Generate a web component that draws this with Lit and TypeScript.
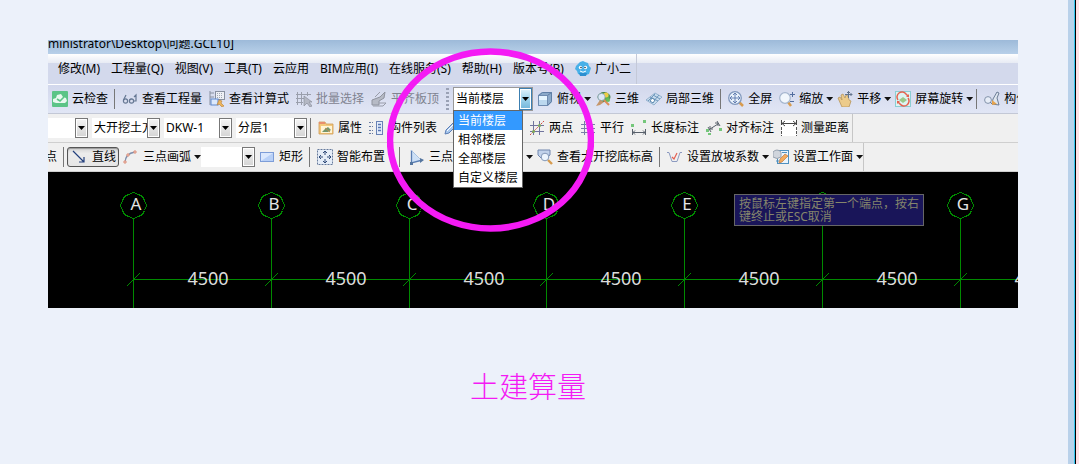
import { LitElement, html, svg, css, nothing, TemplateResult } from "lit";
import { customElement, property } from "lit/decorators.js";

const icons: Record<string, TemplateResult> = {
  mascot: svg`<path d="M5 1 3 3 1 5 0 8l2 2 1 3 3 1 2 1 3-1 3-1 1-3 1-3-2-2-1-3-3-1-2-1z" fill="#48b0e8"/><path d="M4 12h8l-1 3H5z" fill="#2c8fd0"/><circle cx="5.500" cy="6.500" r="1.700" fill="#fff"/><circle cx="10.500" cy="6.500" r="1.700" fill="#fff"/><circle cx="6" cy="6.500" r=".8" fill="#234"/><circle cx="10" cy="6.500" r=".8" fill="#234"/><path d="M5 10q3 2.500 6 0" stroke="#fff" fill="none"/>`,
  cloud: svg`<rect width="16" height="16" rx="1" fill="#5cc487"/><path d="M4 12h9l2-2-1-3-3-1-2-3-4 1-1 3-3 1v3z" fill="#e9f8ef"/><path d="m5 8 3 2 4-4" stroke="#5cc487" stroke-width="1.600" fill="none"/>`,
  glasses: svg`<g fill="none" stroke="#667894" stroke-width="1.200"><circle cx="3.500" cy="10" r="2.100"/><circle cx="9.500" cy="10" r="2.100"/><path d="M1.500 9 4 4M7.500 9l2-1M11.500 10H14V4l-2 2"/></g>`,
  formula: svg`<path d="M1 0v14M1 2h4M1 6h4" stroke="#8890a0" fill="none"/><rect x="6.500" y=".5" width="9" height="8" fill="#eef0f5" stroke="#8890a0"/><path d="M8 2.500h6M8 4.500h6M8 6.500h6" stroke="#a0a6b4" stroke-dasharray="1 1"/><rect x="2" y="8" width="7" height="6" fill="#dce8fb" stroke="#5e89cf"/><path d="m10 9 3 1-1 2 3 3-2 1-3-3-2 1z" fill="#ecb45c" stroke="#b98035" stroke-width=".6"/>`,
  batch: svg`<g fill="none" stroke="#9a9fac"><path d="M1.500 1v13M5.500 1v13M0 3.500h15M0 7.500h8M0 11.500h7M11.500 1v4"/></g><path d="M8 5v10l3-3 3 4 2-1-3-4h3z" fill="#b4b8c4" stroke="#8b8f9c" stroke-width=".7"/>`,
  slab: svg`<path d="M1 9 9 6l5-5-1 6-5 3v4H1z" fill="#b6bac5" stroke="#8f939e"/><path d="m4 6 5-5M8 12h7l-3 3H2" stroke="#989ca8" fill="none"/>`,
  cube: svg`<path d="m1 4 4-3h10v10l-4 4H1z" fill="#8ba9c9"/><path d="M1.500 4.500h9v10h-9z" fill="#bcd8ef" stroke="#6f8bb0"/><path d="m1.500 4.500 4-3h9l-4 3M14.500 1.500v9l-4 4" fill="none" stroke="#5f7ea6"/><path d="M2 5h8v4H2z" fill="#e6f5ff"/>`,
  orbit: svg`<ellipse cx="9" cy="6" rx="6" ry="4.500" fill="#5eae55" stroke="#447c48"/><circle cx="11" cy="4" r="2.500" fill="#eccd45"/><circle cx="6.500" cy="6" r="3.500" fill="#dce8f4" stroke="#8aa0ba" stroke-width=".7"/><path d="m1 15 4-6 4 2-4 3z" fill="#c5966b"/><path d="m9 9 5 5" stroke="#dc8d59" stroke-width="2"/><circle cx="13" cy="9" r="2" fill="#64bd5a"/>`,
  part3d: svg`<path d="m0 9 9-7 7 4-8 8z" fill="#c9ddee" stroke="#7b9fc0" stroke-width=".7"/><path d="m4 6 8 4M7 4l7 4M2 10l7-7M6 12l7-8" fill="none" stroke="#6f97bc"/><path d="m6 7 3 2-2 3-3-2z" fill="#fff" stroke="#5785ae"/>`,
  full: svg`<path d="m11 11 4 4" stroke="#d79b4e" stroke-width="2.500"/><circle cx="7" cy="7" r="6.300" fill="#e8f1fb" stroke="#8198bd" stroke-width="1.300"/><path d="M7 2v10M2 7h10M5 4l2-2 2 2M5 10l2 2 2-2M4 5 2 7l2 2M10 5l2 2-2 2" fill="none" stroke="#5a76ab" stroke-width=".9"/>`,
  zoom: svg`<path d="m9 11 3 4" stroke="#d79b4e" stroke-width="2.500"/><circle cx="6" cy="7" r="5.300" fill="#f2f7fd" stroke="#a5b6ce" stroke-width="1.200"/><path d="M11 3.500h5M13.500 1v5M11 10.500h4" stroke="#526d9e"/>`,
  pan: svg`<path d="m1 7 2-1 2 3-1-5 2-1 2 4 1-3 2 1 1 4 2 1-2 6H5z" fill="#eccb8b" stroke="#b8955c" stroke-width=".8"/><path d="M11.500 0v7M8 3.500h7M10 2l1.500-1.500L13 2M13.500 2 15 3.500 13.500 5" fill="none" stroke="#62738d"/>`,
  rotate: svg`<rect x=".5" y=".5" width="15" height="15" fill="#def3f2" stroke="#8bced3"/><path d="M3 9a5 5 0 0 1 8-6l2 2M13 7a5 5 0 0 1-8 6l-2-2" fill="none" stroke="#e66250" stroke-width="1.500"/><path d="m4 9 4-3 4 3-4 3z" fill="#9bc98a"/><path d="M11 6h3V3zM5 10H2v3z" fill="#e66250"/>`,
  member: svg`<circle cx="4" cy="9" r="3.400" fill="#e7edf7" stroke="#8292aa"/><path d="m6 11 3 3M8 13l1-5 4-7 2 1-2 5 2 7z" fill="#dfe6ef" stroke="#6b7c96"/><path d="m8 9 5 4-5 1z" fill="#e6a34d"/>`,
  props: svg`<path d="M1 2h6l1 2h7v10H1z" fill="#f3c97b" stroke="#cd9955" stroke-width=".8"/><path d="M1 2h6v2H1z" fill="#e88f6d"/><path d="M3 6h11v7H3z" fill="#fff5d6"/><path d="m4 12 3-3 3-2 3 3-3 2z" fill="#74966d"/><path d="m7 8 5 4" stroke="#c08a4c"/>`,
  list: svg`<path d="M0 2.500h4M0 6.500h4M0 10.500h4M0 13.500h4" stroke="#687ca3" stroke-dasharray="2 1"/><rect x="7.500" y="1.500" width="6" height="13" fill="#e4edfb" stroke="#6983b5"/><path d="M9 4.500h3M9 7.500h3M9 10.500h3" stroke="#5877b2" stroke-width="1.500"/>`,
  pencil: svg`<path d="m1 14 1-4 8-8 3 3-8 8z" fill="#a9c8ed" stroke="#5c7eb5"/><path d="m3 11 7-7" stroke="#fff"/>`,
  twopt: svg`<path d="M4.500 1v14M10.500 1v14M1 5.500h14M1 11.500h14" stroke="#71759e"/><path d="M1 15 15 1" stroke="#d34c45" stroke-dasharray="2 1"/><circle cx="4.500" cy="11.500" r="1.500" fill="#7cac5c"/><circle cx="10.500" cy="5.500" r="1.500" fill="#7cac5c"/>`,
  parallel: svg`<path d="M4.500 1v14M1 4.500h5M10 4.500h5M1 8.500h14M1 12.500h14M11.500 1v14" stroke="#7780a6"/>`,
  length: svg`<path d="M1.500 9v6M14.500 9v6M2 12.500h12M4 10.500l-2 2 2 2M12 10.500l2 2-2 2" fill="none" stroke="#58606b"/><path d="M0 4h3v3H0zM12 0h3v3h-3z" fill="#75c77b"/>`,
  align: svg`<path d="m2 7 3 5M11 1l3 5M4 9l8-5M4 6v3h3M9 3h3v3" fill="none" stroke="#58606b"/><path d="M0 9h3v3H0zM2 13h3v2H2zM13 8h3v3h-3z" fill="#75c77b"/>`,
  measure: svg`<path d="M0 0h16v16H0z" fill="#fff"/><path d="M.5 0v5M15.500 0v5M1 3.500h14M4 1 1 3.500 4 6M12 1l3 2.500L12 6" fill="none" stroke="#444"/><path d="M.5 7v9M15.500 7v9" stroke="#555" stroke-dasharray="3 1"/>`,
  line: svg`<path d="m1 2 11 11M12 8v5H7" fill="none" stroke="#223f7c" stroke-width="1.200"/>`,
  arc: svg`<path d="M2 14C2 8 5 4 12 3" fill="none" stroke="#7f8fac" stroke-width="1.300"/><circle cx="2" cy="13" r="1.200" fill="#f4d3c9" stroke="#dc8d78"/><circle cx="5" cy="6" r="1.200" fill="#f4d3c9" stroke="#dc8d78"/><circle cx="12" cy="3" r="1.200" fill="#f4d3c9" stroke="#dc8d78"/>`,
  rect: svg`<rect x="1.500" y="3.500" width="13" height="9" fill="#b8d0f7" stroke="#7d9dd8"/><path d="M2 4h12L2 12z" fill="#dbe8fd"/>`,
  smart: svg`<rect x=".5" y=".5" width="15" height="15" fill="#e5edf8" stroke="#667a9c" stroke-dasharray="2 1"/><path d="M8 2v4M8 10v4M2 8h4M10 8h4M6 4l2-2 2 2M6 12l2 2 2-2M4 6 2 8l2 2M12 6l2 2-2 2" fill="none" stroke="#304b79"/>`,
  slope: svg`<path d="m2 1 10 11-10 2z" fill="#cde0f6"/><path d="M2.500 1v13l11-3" fill="none" stroke="#5a7eb3" stroke-width="1.300"/><path d="m2 1 10 10" fill="none" stroke="#a6c1e2"/><path d="m11 9 4 2-4 3zM1 13h3v3H1z" fill="#56769f"/>`,
  inspect: svg`<path d="M1 1h12v5l-4 3H4L1 6z" fill="#c1d2eb" stroke="#7186ae"/><path d="m11 11 4 4" stroke="#d79b4e" stroke-width="2.400"/><circle cx="8" cy="8" r="3.800" fill="#edf5fe" stroke="#8398b8"/>`,
  ratio: svg`<path d="M0 3.500h2l3 9h5l3-9h2" fill="none" stroke="#8c9ac0"/><path d="m5 8 2 2 3-6" fill="none" stroke="#e36052" stroke-width="1.200"/>`,
  face: svg`<rect x="4.500" y="1.500" width="11" height="13" fill="#eaf4fc" stroke="#4e91c0"/><path d="M0 3q4-4 8 0v5q-4 3-8 0z" fill="#d0d5dc" stroke="#9aa3af"/><path d="m6 14 1-4 5-5 3 2-6 6z" fill="#f2aa5b" stroke="#bb7843" stroke-width=".7"/><path d="M9 3.500h5M3 12h3" stroke="#4e91c0"/>`,
};

@customElement("tool-button")
class ToolButton extends LitElement {
  @property() icon = "";
  @property() label = "";
  @property({ type: Boolean }) drop = false;
  @property({ type: Boolean }) off = false;
  @property({ type: Boolean }) pressed = false;
  static styles = css`
    :host { display: flex; flex: none; }
    button { display: flex; align-items: center; flex: 1; gap: 4px; height: 22px; padding: 0 3px 0 4px; border: 0; background: none; color: #000;
      font: 12px/20px "Noto Sans", "Noto Sans CJK SC", sans-serif; white-space: nowrap; }
    button:disabled { color: #7f8390; }
    .drop { padding-right: 0; }
    .drop .label { margin-right: -1px; }
    .pressed { height: 20px; padding: 0 2px 0 4px; border: 1px solid #555; border-radius: 3px; background: linear-gradient(#d2d2d2, #ececec 30%, #e6e6e6); box-shadow: inset 0 1px 1px #999; }
    svg { width: 16px; height: 16px; flex: none; }
    .arrow { width: 7px; height: 4px; background: #111; clip-path: polygon(0 0, 100% 0, 50% 100%); }
  `;
  render() {
    return html`<button class=${this.drop ? "drop" : this.pressed ? "pressed" : ""} ?disabled=${this.off} aria-label=${this.label || this.icon}>
      ${this.icon ? html`<svg viewBox="0 0 16 16" aria-hidden="true">${icons[this.icon]}</svg>` : nothing}
      ${this.label ? html`<span class="label">${this.label}</span>` : nothing}
      ${this.drop ? html`<span class="arrow"></span>` : nothing}
    </button>`;
  }
}

@customElement("combo-box")
class ComboBox extends LitElement {
  @property() value = "";
  @property() name = "";
  @property({ type: Array }) options: string[] = [];
  @property({ type: Boolean }) open = false;
  static styles = css`
    :host { display: flex; flex: none; position: relative; height: 20px; background: #fff; }
    select { flex: 1; min-width: 0; appearance: none; border: 0; border-radius: 0; margin: 0; padding: 0 0 0 2px; background: #fff; color: #000;
      font: 12px/20px "Noto Sans", "Noto Sans CJK SC", sans-serif; }
    .arrow { width: 11px; flex: none; display: grid; place-items: center; border: 1px solid #777; background: linear-gradient(#f4f4f4, #d4d4d4); box-shadow: inset 0 0 0 1px #fff; pointer-events: none; }
    .arrow::after { content: ""; width: 7px; height: 4px; background: #000; clip-path: polygon(0 0, 100% 0, 50% 100%); }
    :host([open]) { height: 22px; border: 1px solid #999; }
    :host([open]) .arrow { border-color: #3c7fb1; background: linear-gradient(#e0f2fb, #9ed3ec 50%, #72b5da); }
    ul { position: absolute; z-index: 2; left: -1px; top: 22px; margin: 0; padding: 0; list-style: none; background: #fff; border: 1px solid #666; }
    li { padding: 0 4px; font: 12px/19px "Noto Sans", "Noto Sans CJK SC", sans-serif; white-space: nowrap; }
    li[aria-selected="true"] { background: #3399ff; color: #fff; }
  `;
  render() {
    const all = this.options.length ? this.options : [this.value];
    return html`<select aria-label=${this.name}>${all.map(o => html`<option>${o}</option>`)}</select><span class="arrow"></span>
      ${this.open ? html`<ul role="listbox" aria-label=${this.name}>${all.map(o => html`<li role="option" aria-selected=${o === this.value ? "true" : "false"}>${o}</li>`)}</ul>` : nothing}`;
  }
}

const menus = ["修改(M)", "工程量(Q)", "视图(V)", "工具(T)", "云应用", "BIM应用(I)", "在线服务(S)", "帮助(H)", "版本号(B)"];
const axes = ["A", "B", "C", "D", "E", "F", "G"];
const floors = ["当前楼层", "相邻楼层", "全部楼层", "自定义楼层"];
const SPAN = 137.8;

const tool = (icon: string, label: string, drop = false) =>
  html`<tool-button icon=${icon} label=${label} ?drop=${drop}></tool-button>`;
const sep = html`<span class="sep"></span>`;

@customElement("app-root")
class AppRoot extends LitElement {
  static styles = css`
    :host { display: flex; min-height: 100vh; background: #ecf1fa; font: 12px/20px "Noto Sans", "Noto Sans CJK SC", sans-serif; color: #000; }
    main { flex: 1; min-width: 0; padding: 40px 50px 0 48px; }
    .edge { flex: none; width: 6px; background: #b9d1ea; border-right: 1px solid #35c4ee; }
    .outside { flex: none; width: 3px; background: #ffdfe5; border-left: 1px solid #000; }
    .window { position: relative; overflow: hidden; }
    .title { height: 14px; line-height: 8px; background: linear-gradient(#9dbad9, #b8d0e9); white-space: nowrap; overflow: hidden; }
    .menu { display: flex; height: 30px; background: linear-gradient(#fff, #e7ebf4 9px, #d3d9ec 9px); border-bottom: 1px solid #fff; }
    .menu nav { display: flex; align-items: center; gap: 11px; padding: 0 5px 0 10px; border-right: 1px solid #c4c9d8; }
    .menu a { display: flex; align-items: center; gap: 4px; color: inherit; text-decoration: none; white-space: nowrap; }
    .menu svg { width: 16px; height: 16px; }
    .bar { display: flex; align-items: center; white-space: nowrap; height: 28px; border-bottom: 1px solid #cfcfcf; background: #f0f0f0; }
    .bar.blue { background: linear-gradient(#d2d8ec, #e1e6f5); border-color: #c3c8d6; }
    .group { display: flex; align-items: center; flex: none; height: 100%; border-right: 1px solid #c6c6c6; box-sizing: border-box; }
    .sep { flex: none; width: 1px; height: 20px; margin: 0 3px; background: #777; }
    .sep.wide { margin: 0 5px 0 11px; }
    .grip { flex: none; width: 3px; height: 22px; margin: 0 4px; background: repeating-linear-gradient(#9aa1b5 0 2px, transparent 2px 4px); }
    .combos { display: flex; gap: 4px; }
    .w40 { width: 40px; } .w54 { width: 54px; } .w68 { width: 68px; } .w71 { width: 71px; } .w78 { width: 78px; }
    .pencil { width: 85px; }
    .tail { width: 117px; }
    .cut { width: 12px; display: flex; justify-content: flex-end; overflow: hidden; padding-right: 3px; margin-left: -3px; }
    .canvas { position: relative; height: 136px; background: #000; overflow: hidden; }
    .canvas svg { display: block; width: 100%; height: 136px; }
    .grid { stroke: #008a00; fill: none; }
    .letter { font: 17px "Noto Sans", sans-serif; fill: #e4e4e4; text-anchor: middle; }
    .dim { font: 18px "Noto Sans", sans-serif; fill: #dcdcdc; text-anchor: middle; }
    .tip { position: absolute; left: 686px; top: 22px; width: 181px; padding: 2px 3px 2px 4px; border: 1px solid #666; background: #191559; color: #85856c; line-height: 13px; }
    .mark { position: absolute; z-index: 3; left: 339px; top: 8px; width: 207px; height: 184px; pointer-events: none; }
    .caption { margin: 57px 10px 0 0; text-align: center; font: 300 29px/40px "Noto Sans CJK SC", sans-serif; color: #f41af4; }
  `;
  render() {
    return html`<main>
      <section class="window">
        <div class="title">ministrator\\Desktop\\问题.GCL10]</div>
        <div class="menu"><nav>${menus.map(m => html`<a href="#">${m}</a>`)}<a href="#"><svg viewBox="0 0 16 16" aria-hidden="true">${icons.mascot}</svg>广小二</a></nav></div>
        <div class="bar blue">
          ${tool("cloud", "云检查")}${sep}${tool("glasses", "查看工程量")}${tool("formula", "查看计算式")}
          <tool-button icon="batch" label="批量选择" off></tool-button><tool-button icon="slab" label="平齐板顶" off></tool-button>
          <span class="grip"></span>
          <combo-box class="w78" name="楼层" value="当前楼层" .options=${floors} open></combo-box>
          ${tool("cube", "俯视", true)}${tool("orbit", "三维")}${tool("part3d", "局部三维")}${sep}
          ${tool("full", "全屏")}${tool("zoom", "缩放", true)}${tool("pan", "平移", true)}${tool("rotate", "屏幕旋转", true)}${sep}${tool("member", "构件")}
        </div>
        <div class="bar"><div class="group">
          <div class="combos">
            <combo-box class="w40" name="分类"></combo-box>
            <combo-box class="w68" name="类型" value="大开挖土方"></combo-box>
            <combo-box class="w68" name="构件" value="DKW-1"></combo-box>
            <combo-box class="w71" name="分层" value="分层1"></combo-box>
          </div>
          ${sep}${tool("props", "属性")}${tool("list", "构件列表")}<tool-button class="pencil" icon="pencil"></tool-button>
          ${tool("twopt", "两点")}${tool("parallel", "平行")}${tool("length", "长度标注")}${tool("align", "对齐标注")}${tool("measure", "测量距离")}
        </div></div>
        <div class="bar"><div class="group">
          <span class="cut">点</span>${sep}
          <tool-button icon="line" label="直线" pressed></tool-button>${tool("arc", "三点画弧", true)}
          <combo-box class="w54" name="方式"></combo-box>
          ${tool("rect", "矩形")}${sep}${tool("smart", "智能布置")}<span class="sep wide"></span>
          <tool-button class="tail" icon="slope" label="三点定"></tool-button>
          <tool-button drop></tool-button>${tool("inspect", "查看大开挖底标高")}${sep}${tool("ratio", "设置放坡系数", true)}${tool("face", "设置工作面", true)}
        </div></div>
        <div class="canvas">
          <svg>
            <path class="grid" d="M86 107.500H2000" />
            ${axes.map((a, i) => {
              const x = Math.round(85 + i * SPAN) + 0.5;
              return svg`<path class="grid" d="M${x} 46V136M${x - 6.5} 114l13-13" /><path class="grid" shape-rendering="crispEdges" d="M${x} 20.500l5 2 4 2 2 4 2 5-2 5-2 4-4 2-5 2-5-2-4-2-2-4-2-5 2-5 2-4 4-2z" />
                ${a === "F" ? nothing : svg`<text class="letter" x=${x + 2.5} y="38">${a}</text>`}`;
            })}
            ${[...axes.keys()].map(i => svg`<text class="dim" x=${Math.round(160 + i * SPAN)} y="113">4500</text>`)}
          </svg>
          <div class="tip">按鼠标左键指定第一个端点，按右键终止或ESC取消</div>
        </div>
        <svg class="mark" viewBox="0 0 207 184"><ellipse cx="103.500" cy="92" rx="100.500" ry="88.500" fill="none" stroke="#f41af4" stroke-width="6.500" /></svg>
      </section>
      <p class="caption">土建算量</p>
    </main><div class="edge"></div><div class="outside"></div>`;
  }
}
